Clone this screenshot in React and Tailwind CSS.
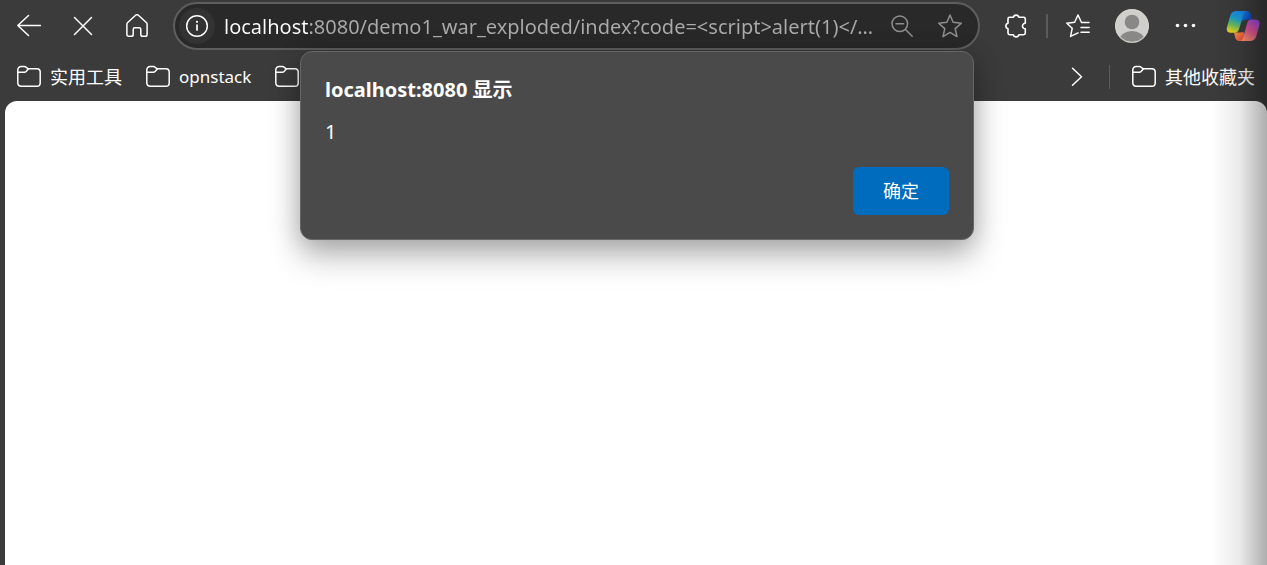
import React from "react";

const stroke = {
  fill: "none",
  stroke: "currentColor",
  strokeLinecap: "round",
  strokeLinejoin: "round",
  "aria-hidden": true,
};

function BackIcon() {
  return (
    <svg {...stroke} className="size-6" viewBox="0 0 24 24" strokeWidth="1.5">
      <path d="M11.500 1.500 0.800 11.500 11.500 21.500M0.800 11.500H23.500" />
    </svg>
  );
}

function StopIcon() {
  return (
    <svg {...stroke} className="size-6" viewBox="0 0 24 24" strokeWidth="1.5">
      <path d="M3.500 3.500 20.500 20.500M20.500 3.500 3.500 20.500" />
    </svg>
  );
}

function HomeIcon() {
  return (
    <svg {...stroke} className="size-6" viewBox="0 0 24 24" strokeWidth="1.5">
      <path d="M10.600 1.300a2.100 2.100 0 0 1 2.800 0l7.900 7.200c.5.450.8 1.100.8 1.800v10.100c0 1-.8 1.800-1.800 1.800h-2.700c-1 0-1.800-.8-1.800-1.800v-5c0-.9-.7-1.600-1.600-1.600h-4.400c-.9 0-1.600.7-1.600 1.600v5c0 1-.8 1.800-1.800 1.800H3.700c-1 0-1.800-.8-1.800-1.800V10.300c0-.7.3-1.350.8-1.800z" />
    </svg>
  );
}

function InfoIcon() {
  return (
    <svg {...stroke} className="size-6" viewBox="0 0 24 24" strokeWidth="1.5">
      <circle cx="12" cy="12" r="10.300" />
      <path d="M12 11v5" strokeWidth="1.700" />
      <circle cx="12" cy="7.800" r="1.100" fill="currentColor" stroke="none" />
    </svg>
  );
}

function ZoomOutIcon() {
  return (
    <svg {...stroke} className="size-6" viewBox="0 0 24 24" strokeWidth="1.5">
      <circle cx="9.800" cy="9.800" r="7.800" />
      <path d="m15.500 15.500 6.700 6.700M6 9.800h7.600" />
    </svg>
  );
}

function StarIcon() {
  return (
    <svg {...stroke} className="size-6" viewBox="0 0 24 24" strokeWidth="1.5">
      <path d="m12 1 3.100 7.300 8.200.9-6.100 5.400 1.800 8-7-4.200-7 4.200 1.800-8L.7 9.200l8.200-.9z" />
    </svg>
  );
}

function ExtensionsIcon() {
  return (
    <svg {...stroke} className="size-6" viewBox="0 0 24 24" strokeWidth="1.6">
      <path d="M9.300 3.300a2.900 2.900 0 0 1 5.600 0h4.800c.9 0 1.600.7 1.600 1.600v4.300a2.800 2.800 0 1 0 0 5.600v4.300c0 .9-.7 1.600-1.600 1.600h-4.800a2.900 2.900 0 0 1-5.600 0H5.600c-.9 0-1.600-.7-1.600-1.600v-4.300a2.900 2.900 0 0 1 0-5.600V4.900c0-.9.7-1.600 1.600-1.600z" />
    </svg>
  );
}

function FavoritesIcon() {
  return (
    <svg {...stroke} className="size-6" viewBox="0 0 24 24" strokeWidth="1.5">
      <path d="M23 8.500h-7.500L12 1 8.600 8.300.8 9.200 6.200 14.300 4.600 22.400 12 18.800" />
      <path d="M15 13.500h8.200M15 18.300h8.200" />
    </svg>
  );
}

function MoreIcon() {
  return (
    <svg className="size-6" viewBox="0 0 24 24" fill="currentColor" aria-hidden="true">
      <circle cx="3.500" cy="11.500" r="1.800" />
      <circle cx="11.500" cy="11.500" r="1.800" />
      <circle cx="19.500" cy="11.500" r="1.800" />
    </svg>
  );
}

function FolderIcon() {
  return (
    <svg {...stroke} className="size-6 shrink-0" viewBox="0 0 24 24" strokeWidth="1.5">
      <path d="M.8 4.900c0-1.900 1.400-3.300 3.300-3.300h3.400c.7 0 1.300.3 1.800.7L11.300 3.800h8.600c1.900 0 3.300 1.400 3.300 3.300v10.900c0 1.900-1.400 3.300-3.300 3.300H4.100c-1.900 0-3.300-1.400-3.300-3.300z" />
      <path d="M.8 7.200h6.500c.7 0 1.300-.2 1.800-.7L11.500 3.800" />
    </svg>
  );
}

function ChevronIcon() {
  return (
    <svg {...stroke} className="size-6" viewBox="0 0 24 24" strokeWidth="1.5">
      <path d="m7.500 3.200 9 8.500-9 8.500" />
    </svg>
  );
}

function Avatar() {
  return (
    <svg className="size-[34px]" viewBox="0 0 34 34" aria-hidden="true">
      <clipPath id="avatar-clip">
        <circle cx="17" cy="17" r="17" />
      </clipPath>
      <g clipPath="url(#avatar-clip)">
        <rect width="34" height="34" fill="#d1cfcc" />
        <circle cx="17" cy="13" r="7.300" fill="#8a8886" />
        <ellipse cx="17" cy="31" rx="12.500" ry="9" fill="#8a8886" />
      </g>
      <circle cx="17" cy="17" r="16.300" fill="none" stroke="#d6d4d1" strokeWidth="1" />
    </svg>
  );
}

function CopilotIcon() {
  return (
    <svg className="h-8 w-[34px] shrink-0" viewBox="0 0 34 32" aria-hidden="true">
      <defs>
        <linearGradient id="cp-left" x1="0.600" y1="0" x2="0.300" y2="1">
          <stop offset="0" stopColor="#1b87e8" />
          <stop offset="0.350" stopColor="#1c9fd0" />
          <stop offset="0.650" stopColor="#63bd62" />
          <stop offset="1" stopColor="#f5d51c" />
        </linearGradient>
        <linearGradient id="cp-top" x1="0" y1="0" x2="1" y2="0.500">
          <stop offset="0" stopColor="#158de8" />
          <stop offset="1" stopColor="#153fc0" />
        </linearGradient>
        <linearGradient id="cp-right" x1="0.750" y1="0" x2="0.250" y2="1">
          <stop offset="0" stopColor="#9a48dc" />
          <stop offset="0.500" stopColor="#df5494" />
          <stop offset="1" stopColor="#ff9168" />
        </linearGradient>
        <linearGradient id="cp-bottom" x1="0" y1="0" x2="1" y2="1">
          <stop offset="0" stopColor="#ffab3d" />
          <stop offset="1" stopColor="#e63c42" />
        </linearGradient>
      </defs>
      <path d="M14 1h6.500c2.300 0 3.600 1.200 4.300 3.300l1.600 5.200h-5.200c-2.400 0-3.700 1.100-4.400 3.500z" fill="url(#cp-top)" />
      <path d="M8 22.500h5c2.200 0 3.500-1.200 4.200-3.500l2 12H13c-2 0-3.200-1.300-3.800-3.400z" fill="url(#cp-bottom)" />
      <path d="M10.500 1H21c-2 .2-3 1.500-3.700 4l-4.200 14c-.8 2.600-2.200 3.700-4.600 3.700H4.300C1.400 22.700.3 20.500 1 17.300L4 6.500C5.100 2.700 7 1 10.500 1z" fill="url(#cp-left)" />
      <path d="M21.500 10.500 17.600 22.200h-4.400l3.700-11.700z" fill="#3b3b3b" />
      <path d="M25.200 9.400h4c3.500 0 5.100 2 4.300 5.500l-3 10.600C29.400 29.400 27.200 31 23.800 31H14c1.800-.4 2.700-1.600 3.300-3.700l3.800-14c.7-2.700 1.900-3.900 4.100-3.900z" fill="url(#cp-right)" />
    </svg>
  );
}

function ToolButton({ label, children }) {
  return (
    <button type="button" aria-label={label} className="flex h-12 w-[54px] shrink-0 items-center justify-center">
      {children}
    </button>
  );
}

function Bookmark({ label, title, latin = false }) {
  return (
    <a href="#" aria-label={title} className="flex shrink-0 items-center gap-[9px] whitespace-nowrap">
      <FolderIcon />
      {label && <span className={latin ? "text-[17px] leading-6" : "text-lg leading-6"}>{label}</span>}
    </a>
  );
}

function AddressBar() {
  return (
    <div className="ml-[9px] flex h-12 min-w-0 flex-1 items-center rounded-full border-2 border-[#5e5e5e] bg-[#292929] pr-1 pl-1">
      <button type="button" aria-label="查看站点信息" className="flex size-9 shrink-0 items-center justify-center rounded-full bg-[#333333]">
        <InfoIcon />
      </button>
      <input
        type="text"
        aria-label="地址和搜索栏"
        readOnly
        value="localhost:8080/demo1_war_exploded/index?code=<script>alert(1)</…"
        className="ml-[9px] h-8 min-w-0 flex-1 bg-linear-to-r from-white from-[84px] to-[#ababab] to-[84px] bg-clip-text text-xl text-transparent outline-none"
      />
      <div className="flex text-[#8f8f8f]">
        <button type="button" aria-label="缩小" className="flex h-10 w-12 items-center justify-center">
          <ZoomOutIcon />
        </button>
        <button type="button" aria-label="收藏此页" className="flex h-10 w-12 items-center justify-center">
          <StarIcon />
        </button>
      </div>
    </div>
  );
}

function AlertDialog() {
  return (
    <div className="absolute inset-x-0 top-[51px] flex justify-center pl-[7px]">
      <div
        role="alertdialog"
        aria-labelledby="alert-title"
        aria-describedby="alert-message"
        className="flex w-[674px] flex-col rounded-xl border border-[#666666] bg-[#4a4a4a] p-6 shadow-[0_16px_32px_rgba(0,0,0,0.28),0_2px_24px_rgba(0,0,0,0.16)]"
      >
        <h1 id="alert-title" className="text-xl leading-7 font-bold">localhost:8080 显示</h1>
        <p id="alert-message" className="mt-4 text-xl leading-6">1</p>
        <button type="button" className="mt-[23px] h-12 w-24 self-end rounded-md bg-[#006cbe] text-lg leading-6">
          确定
        </button>
      </div>
    </div>
  );
}

export default function App() {
  return (
    <div className="relative flex min-h-screen flex-col overflow-hidden bg-[#3b3b3b] font-['Noto_Sans','Noto_Sans_CJK_SC',sans-serif] text-white">
      <header>
        <nav aria-label="工具栏" className="flex h-[52px] items-center pl-0.5">
          <ToolButton label="后退"><BackIcon /></ToolButton>
          <ToolButton label="停止"><StopIcon /></ToolButton>
          <ToolButton label="主页"><HomeIcon /></ToolButton>
          <AddressBar />
          <div className="ml-[9px] flex shrink-0 items-center">
            <ToolButton label="扩展"><ExtensionsIcon /></ToolButton>
            <span className="mx-[3px] h-6 w-0.5 bg-[#5c5c5c]" />
            <ToolButton label="收藏夹"><FavoritesIcon /></ToolButton>
            <ToolButton label="个人资料"><Avatar /></ToolButton>
            <ToolButton label="设置及其他"><MoreIcon /></ToolButton>
            <button type="button" aria-label="Copilot" className="ml-1.5 flex h-12 w-12 items-center justify-center">
              <CopilotIcon />
            </button>
          </div>
        </nav>
        <nav aria-label="收藏夹栏" className="flex h-[49px] items-center justify-between pr-3 pl-[17px]">
          <div className="flex items-center gap-6">
            <Bookmark label="实用工具" title="实用工具" />
            <Bookmark label="opnstack" title="opnstack" latin />
            <Bookmark title="文件夹" />
          </div>
          <div className="flex items-center">
            <button type="button" aria-label="更多收藏夹" className="mr-5">
              <ChevronIcon />
            </button>
            <span className="mr-[22px] h-6 w-px bg-[#5c5c5c]" />
            <Bookmark label="其他收藏夹" title="其他收藏夹" />
          </div>
        </nav>
      </header>
      <main className="ml-[5px] flex-1 rounded-t-xl bg-white" />
      <AlertDialog />
      <div className="pointer-events-none absolute inset-y-0 right-0 w-14 bg-linear-to-r from-transparent via-black/8 to-black/32" />
    </div>
  );
}
